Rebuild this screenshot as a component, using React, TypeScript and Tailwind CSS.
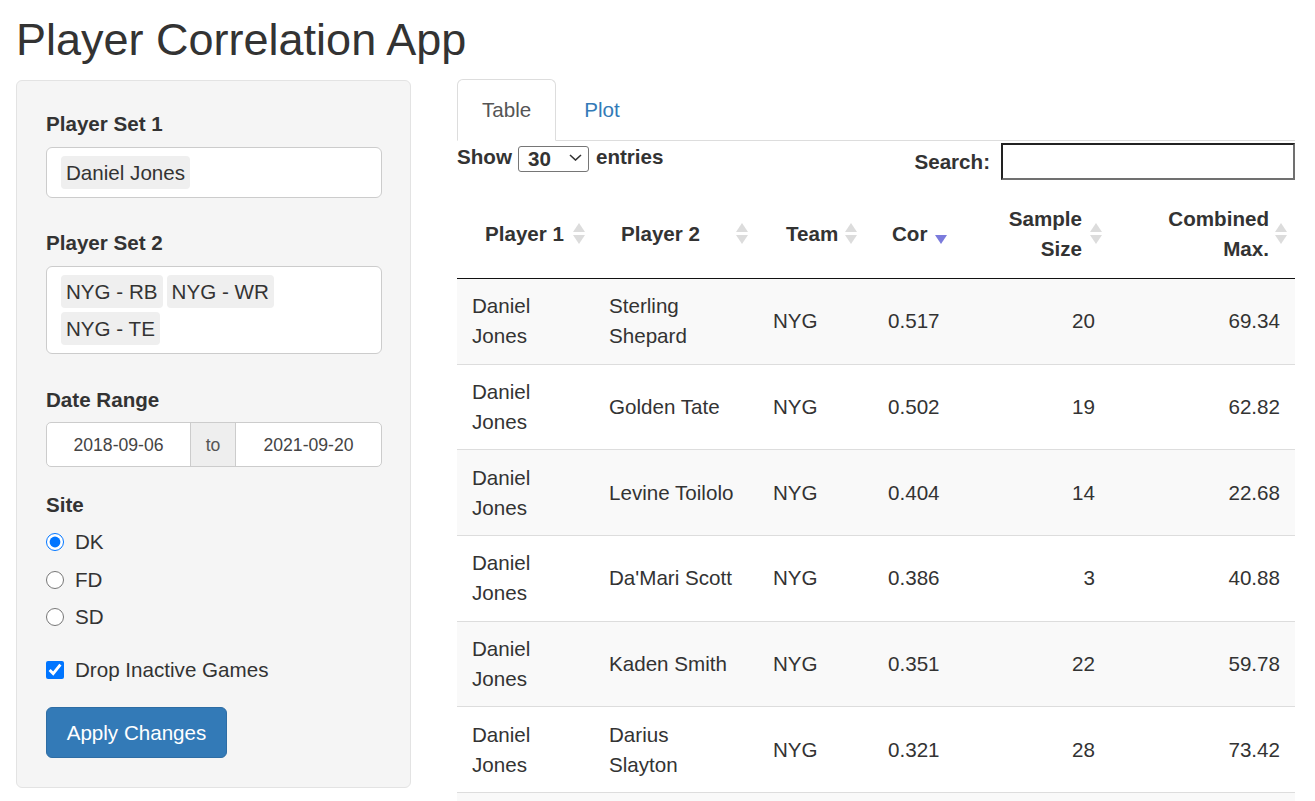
import React from "react";

type RowData = {
  p1: string;
  p2: string[];
  team: string;
  cor: string;
  size: string;
  max: string;
};

const rows: RowData[] = [
  { p1: "Daniel Jones", p2: ["Sterling", "Shepard"], team: "NYG", cor: "0.517", size: "20", max: "69.34" },
  { p1: "Daniel Jones", p2: ["Golden Tate"], team: "NYG", cor: "0.502", size: "19", max: "62.82" },
  { p1: "Daniel Jones", p2: ["Levine Toilolo"], team: "NYG", cor: "0.404", size: "14", max: "22.68" },
  { p1: "Daniel Jones", p2: ["Da'Mari Scott"], team: "NYG", cor: "0.386", size: "3", max: "40.88" },
  { p1: "Daniel Jones", p2: ["Kaden Smith"], team: "NYG", cor: "0.351", size: "22", max: "59.78" },
  { p1: "Daniel Jones", p2: ["Darius", "Slayton"], team: "NYG", cor: "0.321", size: "28", max: "73.42" },
];

const columns = [
  { key: "p1", w: "w-[137px]", label: ["Player 1"], th: "pl-[28px] pr-[24px] text-left", icon: "right-[9px]", td: "pl-[15px] pr-[15px] text-left" },
  { key: "p2", w: "w-[164px]", label: ["Player 2"], th: "pl-[27px] pr-[24px] text-left", icon: "right-[10px]", td: "pl-[15px] pr-[15px] text-left" },
  { key: "team", w: "w-[115px]", label: ["Team"], th: "pl-[28px] pr-[24px] text-left", icon: "right-[16px]", td: "pl-[15px] pr-[15px] text-left" },
  { key: "cor", w: "w-[83px]", label: ["Cor"], th: "pl-[19px] pr-[20px] text-left", icon: "right-[9px]", td: "pl-[15px] pr-[15px] text-left" },
  { key: "size", w: "w-[155px]", label: ["Sample", "Size"], th: "pl-[10px] pr-[29px] text-right", icon: "right-[9px]", td: "pl-[15px] pr-[16px] text-right" },
  { key: "max", w: "w-[184px]", label: ["Combined", "Max."], th: "pl-[10px] pr-[26px] text-right", icon: "right-[8px]", td: "pl-[15px] pr-[15px] text-right" },
];

function SortIcon({ active }: { active?: boolean }) {
  return (
    <svg width="12" height="22" viewBox="0 0 12 22" className="block">
      {!active && <polygon points="6,0 12,9 0,9" fill="#dcdcdc" />}
      <polygon points="0,12 12,12 6,21" fill={active ? "#7b7bdc" : "#dcdcdc"} />
    </svg>
  );
}

function Chip({ text }: { text: string }) {
  return (
    <span className="h-[33px] rounded-[4px] bg-[#efefef] px-[5px] leading-[33px]">{text}</span>
  );
}

function Sidebar() {
  return (
    <div className="mt-px w-[395px] rounded-[6px] border border-[#e3e3e3] bg-[#f5f5f5] pb-[29px] pl-[29px] pr-[28px] pt-[28px]">
      <div className="font-bold">Player Set 1</div>
      <div className="mt-[8px] flex flex-wrap gap-[4px] rounded-[6px] border border-[#ccc] bg-white px-[14px] py-[8px]">
        <Chip text="Daniel Jones" />
      </div>

      <div className="mt-[30px] font-bold">Player Set 2</div>
      <div className="mt-[8px] flex flex-wrap gap-[4px] rounded-[6px] border border-[#ccc] bg-white px-[14px] py-[8px]">
        <Chip text="NYG - RB" />
        <Chip text="NYG - WR" />
        <Chip text="NYG - TE" />
      </div>

      <div className="mt-[31px] font-bold">Date Range</div>
      <div className="mt-[7px] flex h-[45px] overflow-hidden rounded-[5px] border border-[#ccc] bg-white text-[17.6px] text-[#444]">
        <div className="flex w-[143px] items-center justify-center">2018-09-06</div>
        <div className="flex w-[46px] items-center justify-center border-x border-[#ccc] bg-[#eee] text-[#555]">to</div>
        <div className="flex flex-1 items-center justify-center">2021-09-20</div>
      </div>

      <div className="mt-[23px] font-bold">Site</div>
      <div className="mt-[7px] flex flex-col gap-[7.5px]">
        {["DK", "FD", "SD"].map((s, i) => (
          <label key={s} className="flex h-[30px] items-center gap-[11px]">
            <input type="radio" name="site" defaultChecked={i === 0} className="m-0 h-[18px] w-[18px]" />
            <span>{s}</span>
          </label>
        ))}
      </div>

      <label className="mt-[23px] flex h-[30px] items-center gap-[11px]">
        <input type="checkbox" defaultChecked className="m-0 h-[18px] w-[18px]" />
        <span>Drop Inactive Games</span>
      </label>

      <button className="mt-[22px] flex h-[51px] w-[181px] items-center justify-center rounded-[6px] border border-[#2e6da4] bg-[#337ab7] text-white">
        Apply Changes
      </button>
    </div>
  );
}

function Main() {
  return (
    <div className="ml-[46px] w-[838px]">
      <ul className="flex border-b border-[#ddd]">
        <li className="-mb-px rounded-t-[6px] border border-[#ddd] border-b-transparent bg-white px-[24px] py-[15px] text-[#555]">
          Table
        </li>
        <li className="-mb-px ml-[3px] border border-transparent px-[24px] py-[15px] text-[#337ab7]">Plot</li>
      </ul>

      <div className="flex items-start justify-between pt-px">
        <div className="flex h-[30px] items-center font-bold">
          <span>Show</span>
          <div className="relative ml-[6px] h-[26px] w-[71px]">
            <select
              defaultValue="30"
              className="h-full w-full appearance-none rounded-[3px] border border-[#767676] bg-white pl-[9px] leading-[24px] font-bold text-[#333]"
            >
              <option value="10">10</option>
              <option value="30">30</option>
              <option value="50">50</option>
              <option value="100">100</option>
            </select>
            <svg width="13" height="7" viewBox="0 0 13 7" className="pointer-events-none absolute right-[7px] top-[10px]">
              <path d="M1 1l5.5 5 5.5-5" fill="none" stroke="#333" strokeWidth="1.6" />
            </svg>
          </div>
          <span className="ml-[7px]">entries</span>
        </div>
        <div className="mt-px flex items-center gap-[11px] font-bold">
          <span>Search:</span>
          <input
            type="search"
            className="h-[37px] w-[294px] border-2 border-b-[#707070] border-l-[#222] border-r-[#707070] border-t-[#222] bg-white px-[4px] outline-none"
          />
        </div>
      </div>

      <table className="mt-[10px] w-[838px] table-fixed border-collapse">
        <colgroup>
          {columns.map((c) => (
            <col key={c.key} className={c.w} />
          ))}
        </colgroup>
        <thead>
          <tr>
            {columns.map((c) => (
              <th
                key={c.key}
                className={`relative border-b border-[#111] pb-[14px] pt-[14px] align-middle font-bold ${c.th}`}
              >
                {c.label.map((l) => (
                  <div key={l}>{l}</div>
                ))}
                <span className={`absolute top-1/2 -translate-y-1/2 ${c.icon}`}>
                  <SortIcon active={c.key === "cor"} />
                </span>
              </th>
            ))}
          </tr>
        </thead>
        <tbody>
          {rows.map((r, i) => (
            <tr key={r.p2.join(" ")} className={i % 2 === 0 ? "bg-[#f9f9f9]" : "bg-white"}>
              <td className={`border-b border-[#ddd] pb-[12.33px] pt-[12.33px] align-middle ${columns[0].td}`}>{r.p1}</td>
              <td className={`border-b border-[#ddd] pb-[12.33px] pt-[12.33px] align-middle ${columns[1].td}`}>
                {r.p2.map((l) => (
                  <div key={l}>{l}</div>
                ))}
              </td>
              <td className={`border-b border-[#ddd] pb-[12.33px] pt-[12.33px] align-middle ${columns[2].td}`}>{r.team}</td>
              <td className={`border-b border-[#ddd] pb-[12.33px] pt-[12.33px] align-middle ${columns[3].td}`}>{r.cor}</td>
              <td className={`border-b border-[#ddd] pb-[12.33px] pt-[12.33px] align-middle ${columns[4].td}`}>{r.size}</td>
              <td className={`border-b border-[#ddd] pb-[12.33px] pt-[12.33px] align-middle ${columns[5].td}`}>{r.max}</td>
            </tr>
          ))}
          {/* next page row starts just past the fold */}
          <tr className="bg-[#f9f9f9]">
            <td colSpan={6} className="h-[30px]" />
          </tr>
        </tbody>
      </table>
    </div>
  );
}

export default function App() {
  return (
    <div className="min-h-screen bg-white pl-[16px] font-['Liberation_Sans',Arial,sans-serif] text-[20.6px] leading-[30px] text-[#333]">
      <h2 className="pt-[16px] text-[45px] font-normal leading-[48px]">Player Correlation App</h2>
      <div className="mt-[15px] flex items-start">
        <Sidebar />
        <Main />
      </div>
    </div>
  );
}
